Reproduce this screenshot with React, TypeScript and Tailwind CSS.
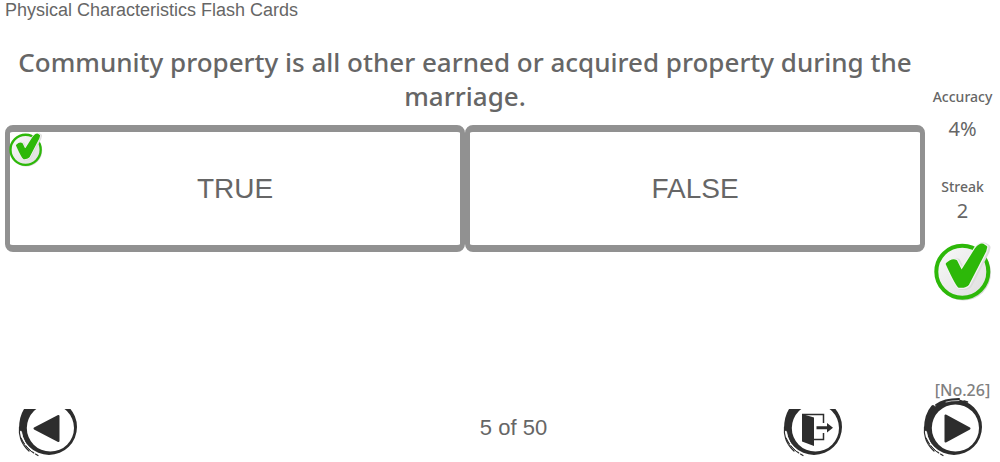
import type { ReactNode } from 'react';

function CheckMark({ className }: { className: string }) {
  return (
    <svg viewBox="0 0 62 62" className={className} aria-hidden="true">
      <defs>
        <linearGradient id="disc" x1="0" y1="0" x2="1" y2="1">
          <stop offset="0.2" stopColor="#f4f4f4" />
          <stop offset="1" stopColor="#dedede" />
        </linearGradient>
      </defs>
      <circle cx="31.5" cy="32" r="27.5" fill="#d9d9d9" />
      <circle cx="30.3" cy="30.7" r="26" fill="url(#disc)" stroke="#2db809" strokeWidth="4" />
      <path
        d="M15 23Q20 18 24 20L29.500 31L44 8Q48 3 51 4L54 6L53 10L36 43Q34 46 27 45.500Q25 45 15 23Z"
        transform="translate(1.500 0.500)"
        fill="#dcdcdc"
        stroke="#dcdcdc"
        strokeWidth="6"
        strokeLinejoin="round"
      />
      <path
        d="M15 23Q20 18 24 20L29.500 31L44 8Q48 3 51 4L54 6L53 10L36 43Q34 46 27 45.500Q25 45 15 23Z"
        fill="#f3f3f3"
        stroke="#f3f3f3"
        strokeWidth="5"
        strokeLinejoin="round"
      />
      <path
        d="M15 23Q20 18 24 20L29.500 31L44 8Q48 3 51 4L54 6L53 10L36 43Q34 46 27 45.500Q25 45 15 23Z"
        fill="#2db809"
        stroke="#2db809"
        strokeWidth="2.500"
        strokeLinejoin="round"
      />
    </svg>
  );
}

function BrushRing({ clipped = false, children }: { clipped?: boolean; children: ReactNode }) {
  return (
    <svg
      viewBox={clipped ? '0 13 64 51' : '0 0 64 64'}
      className={clipped ? 'block h-[51px] w-16' : 'block size-16'}
      aria-hidden="true"
    >
      <path
        fillRule="evenodd"
        fill="#2d2d2d"
        d="M5 31A28 28 0 0 1 61 31A28 28 0 0 1 5 31ZM10.800 32A23.600 23.600 0 0 0 58 32A23.600 23.600 0 0 0 10.800 32Z"
      />
      <g fill="none" stroke="#2d2d2d" strokeLinecap="round">
        <path d="M12 11Q5 19 5 33" strokeWidth="4" />
        <path d="M15 9Q23 3 38 3" strokeWidth="2" />
        <path d="M43 5L46.500 6" strokeWidth="1.500" />
        <path d="M3.500 31Q2 45 13 55" strokeWidth="1.200" strokeDasharray="12 1 5 1" />
        <path d="M5 42Q10 53 22 59.500" strokeWidth="1.200" strokeDasharray="7 2 3 1" />
      </g>
      <g fill="none" stroke="#fff" strokeLinecap="round">
        <path d="M25 6Q30 4.500 38 4.500" strokeWidth="0.700" />
        <path d="M5.500 36Q7 47 16 55" strokeWidth="0.900" strokeDasharray="9 1 5 1" />
      </g>
      {children}
    </svg>
  );
}

function Answer({ label, correct = false }: { label: string; correct?: boolean }) {
  return (
    <button
      type="button"
      className="relative h-[127px] flex-1 rounded-lg border-x-5 border-y-7 border-[#919191] bg-white text-[28px] leading-8"
    >
      {correct && <CheckMark className="absolute top-0 -left-0.5 size-9" />}
      {label}
    </button>
  );
}

export default function App() {
  return (
    <div className="flex min-h-screen flex-col bg-white font-['Liberation_Sans',Arial,sans-serif] text-[#666]">
      <header className="px-[5px]">
        <h1 className="text-lg leading-5">Physical Characteristics Flash Cards</h1>
      </header>

      <div className="flex flex-1">
        <main className="flex-1 pt-[25px] pl-[5px]">
          <h2 className="px-2 text-center font-['Noto_Sans','Open_Sans',sans-serif] text-[26px] leading-[34px] font-medium">
            Community property is all other earned or acquired property during the marriage.
          </h2>
          <div className="mt-3 flex">
            <Answer label="TRUE" correct />
            <Answer label="FALSE" />
          </div>
        </main>

        <aside className="flex w-[75px] flex-col items-center pt-[67px] font-['Noto_Sans','Open_Sans',sans-serif]">
          <p className="text-sm leading-5 font-medium">Accuracy</p>
          <p className="mt-3 text-xl leading-5">4%</p>
          <p className="mt-[38px] text-sm leading-5 font-medium">Streak</p>
          <p className="mt-1 text-xl leading-5">2</p>
          <CheckMark className="mt-5 size-[62px]" />
          <p className="mt-auto text-base leading-5 font-medium text-[#808080]">[No.26]</p>
        </aside>
      </div>

      <footer className="relative -mt-1 flex items-end pr-[15px] pb-0.5 pl-4">
        <button type="button" aria-label="Previous card">
          <BrushRing clipped>
            <path
              d="M18.500 32.500L42.500 20V45Z"
              fill="#2d2d2d"
              stroke="#2d2d2d"
              strokeWidth="2"
              strokeLinejoin="round"
            />
          </BrushRing>
        </button>
        <p className="flex-1 pb-4 pl-[166px] text-center text-[22px] leading-8">5 of 50</p>
        <div className="flex items-end gap-[76px]">
          <button type="button" aria-label="Exit">
            <BrushRing clipped>
              <path d="M21 18L33 21.500V50L21 45.500Z" fill="#2d2d2d" />
              <path
                d="M21 18.500H42.500V27M42.500 37V43.500H33"
                fill="none"
                stroke="#2d2d2d"
                strokeWidth="1.500"
              />
              <path d="M35.500 30.300H46V27L52 31.700L46 36.500V33.200H35.500Z" fill="#2d2d2d" />
            </BrushRing>
          </button>
          <button type="button" aria-label="Next card">
            <BrushRing>
              <path
                d="M24.500 19.500V45.500L48.500 32.500Z"
                fill="#2d2d2d"
                stroke="#2d2d2d"
                strokeWidth="2"
                strokeLinejoin="round"
              />
            </BrushRing>
          </button>
        </div>
      </footer>
    </div>
  );
}
